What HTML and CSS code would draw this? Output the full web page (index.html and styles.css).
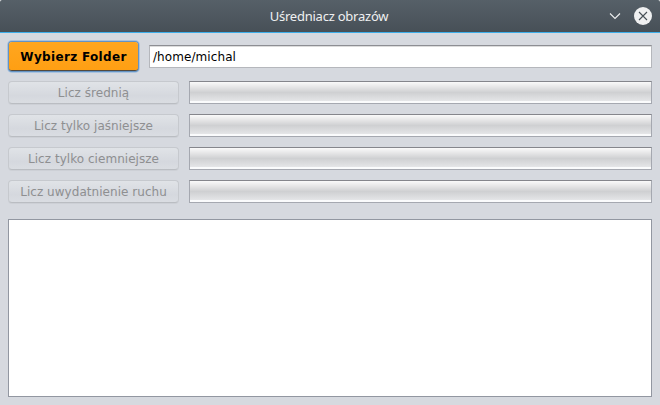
FILE: index.html
```html
<!DOCTYPE html>
<html lang="pl">
<head>
<meta charset="utf-8">
<title>Uśredniacz obrazów</title>
<link rel="stylesheet" href="styles.css">
</head>
<body>
<header class="titlebar">
  <h1>Uśredniacz obrazów</h1>
  <div class="controls">
    <svg width="12" height="18" viewBox="0 0 12 18"><path d="M1 6.5 6 11.5 11 6.5" fill="none" stroke="#eff0f1" stroke-width="1.1"/></svg>
    <svg width="18" height="18" viewBox="0 0 18 18"><circle cx="9" cy="9" r="9" fill="#eff0f1"/><path d="M5 5 13 13M13 5 5 13" stroke="#475057" stroke-width="1.1"/></svg>
  </div>
</header>
<main>
  <div class="folder-row">
    <button class="choose">Wybierz Folder</button>
    <div class="path">/home/michal</div>
  </div>
  <div class="actions">
    <button class="action" disabled>Licz średnią</button><div class="progress"></div>
    <button class="action" disabled>Licz tylko jaśniejsze</button><div class="progress"></div>
    <button class="action" disabled>Licz tylko ciemniejsze</button><div class="progress"></div>
    <button class="action" disabled>Licz uwydatnienie ruchu</button><div class="progress"></div>
  </div>
  <div class="output"></div>
</main>
</body>
</html>
```
FILE: styles.css
```css
* { box-sizing: border-box; }
html { background: #fff; }
body {
  margin: 0;
  width: 660px;
  height: 405px;
  display: flex;
  flex-direction: column;
  background: linear-gradient(#fff 4px, #d6d9df 4px);
  font: 12px "DejaVu Sans", sans-serif;
  overflow: hidden;
}
.titlebar {
  height: 33px;
  flex: none;
  display: grid;
  grid-template-columns: 1fr auto 1fr;
  align-items: center;
  background: linear-gradient(#566068, #475057);
  border-bottom: 1px solid #3daee9;
  border-radius: 2px 2px 0 0;
}
h1 {
  grid-column: 2;
  margin: 0;
  padding-right: 2px;
  font: 13px/18px "Noto Sans", sans-serif;
  letter-spacing: -0.23px;
  color: #eff0f1;
}
.controls {
  justify-self: end;
  display: flex;
  gap: 13px;
  margin-right: 8px;
}
main {
  flex: 1;
  display: flex;
  flex-direction: column;
  padding: 8px;
}
.folder-row {
  display: flex;
  align-items: center;
  gap: 10px;
  height: 31px;
  margin-bottom: 9px;
}
button {
  font: inherit;
  padding: 0;
  white-space: nowrap;
}
.choose {
  width: 129px;
  height: 29px;
  margin: 0 1px;
  padding-top: 2px;
  background: linear-gradient(#ffa61f, #ff9f13);
  border: 0;
  border-bottom: 1px solid #52493d;
  border-radius: 3px;
  box-shadow: 0 0 0 1px #6493c4, 0 0 0 2px #a9c3df;
  font-weight: bold;
  letter-spacing: 0.33px;
  color: #000;
}
.path {
  flex: 1;
  height: 23px;
  padding: 1px 0 0 3px;
  line-height: 21px;
  letter-spacing: 0.08px;
  background: #fff;
  border: 1px solid #b5b7bc;
  border-top-color: #8d8e93;
  box-shadow: inset 0 1px #dcdcdc;
  color: #000;
}
.actions {
  display: grid;
  grid-template-columns: 171px 1fr;
  grid-auto-rows: 23px;
  gap: 10px;
  margin-bottom: 16px;
}
.action {
  padding-top: 1px;
  background: linear-gradient(#e0e3e7, #d5d8de 65%, #dadde2);
  border: 1px solid #c6c9ce;
  border-bottom-color: #babdc2;
  border-radius: 4px;
  box-shadow: 0 1px #cdd0d6;
  letter-spacing: 0.04px;
  color: #8e8f91;
}
.progress {
  border: 1px solid #a5a8b0;
  border-top-color: #85868c;
  background: linear-gradient(#fafafa, #e5e5e6 25%, #cfd0d2 50%, #e3e4e6 88%, #fafbfc 92%);
}
.output {
  flex: 1;
  background: #fff;
  border: 1px solid #9297a1;
}
```
